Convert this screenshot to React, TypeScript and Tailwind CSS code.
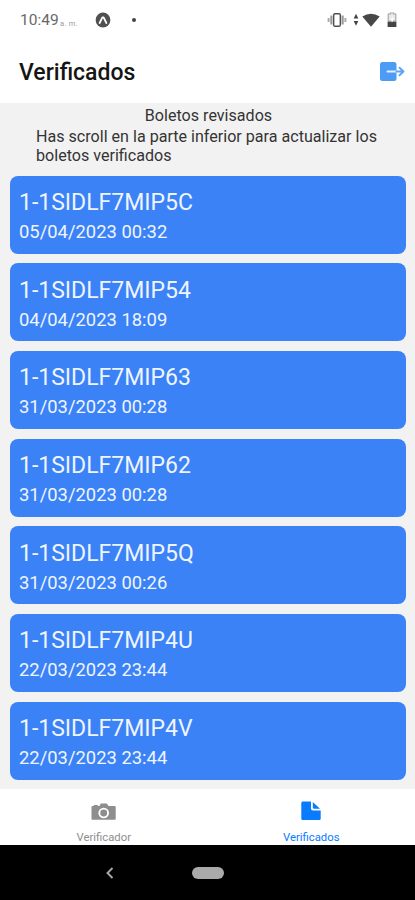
import React from 'react';

type Ticket = {
    code: string;
    date: string;
};

const StatusBar = () => {
    return (
        <div className="h-10 shrink-0 flex items-center justify-between pl-5 pr-[17px] text-[#686868]">
            <div className="flex items-center">
                <span className="w-10 text-[15.5px] leading-5 whitespace-nowrap">10:49</span>
                <span className="w-[19px] pt-2 text-[7.5px] leading-3 tracking-[0.3px] text-[#9a9a9a] whitespace-nowrap">a. m.</span>
                <svg viewBox="0 0 16 16" className="ml-4 h-4 w-4">
                    <circle cx="8" cy="8" r="7.4" fill="#505050" />
                    <path d="M4.6 11 7.4 5.4h1.2l2.8 5.6" fill="none" stroke="#fff" strokeWidth="1.8" strokeLinecap="round" strokeLinejoin="round" />
                </svg>
                <span className="ml-[21px] h-1 w-1 rounded-full bg-[#444]" />
            </div>
            <div className="flex items-center">
                <svg viewBox="0 0 20 16" className="h-4 w-5">
                    <path d="M4.4 3.5v9M15.6 3.5v9" stroke="#999" strokeWidth="2.2" />
                    <path d="M1.6 6v4M18.4 6v4" stroke="#aaa" strokeWidth="2" />
                    <rect x="6.7" y="1.8" width="6.6" height="12.4" rx="1.2" fill="#fff" stroke="#505050" strokeWidth="1.4" />
                </svg>
                <svg viewBox="0 0 6 14" className="ml-1.5 h-3.5 w-1.5">
                    <path d="M3 .8 5.3 5.500H.7ZM3 12.800.7 8h4.600Z" fill="#444" />
                </svg>
                <svg viewBox="0 0 18 14" className="ml-[3px] h-3.5 w-[18px]">
                    <path d="M.3 3.400Q9-1.800 17.700 3.400L9 13.800Z" fill="#484848" />
                </svg>
                <svg viewBox="0 0 12 16" className="ml-1.5 h-4 w-3">
                    <path d="M4.300 2V1h3.400v1h2.100v7H2.200V2Z" fill="#e8e8e8" stroke="#aaa" strokeWidth="1.200" />
                    <path d="M1.600 9.600h8.800V15H1.600Z" fill="#444" />
                    <path d="M6.600 4 4.300 8.400h1.500v2.400l2.400-4.200H6.600Z" fill="#fff" />
                </svg>
            </div>
        </div>
    );
};

const ExitIcon = () => (
    <svg viewBox="0 0 26 20" className="h-5 w-[26px]">
        <rect x="1" y="0" width="16.5" height="19" rx="2.5" fill="#4c9bf5" />
        <path d="M8.500 9.500h9" stroke="#e3f0ff" strokeWidth="2" strokeLinecap="round" />
        <path d="M17.500 9.500h6M20.500 5.700l4 3.800-4 3.800" fill="none" stroke="#5ba4f7" strokeWidth="1.900" strokeLinecap="round" strokeLinejoin="round" />
    </svg>
);

const TicketCard = ({ code, date }: Ticket) => {
    return (
        <div className="h-[78.2px] shrink-0 rounded-lg bg-[#3b82f6] pl-[9px] pt-[12.4px] text-[#eef5ff]">
            <p className="text-[23px] leading-[30px]">{code}</p>
            <p className="text-[18.4px] leading-[28.4px]">{date}</p>
        </div>
    );
};

const TabBar = () => {
    return (
        <nav className="h-14 shrink-0 flex bg-white text-[11.3px] leading-3">
            <div className="flex-1 flex flex-col items-center pt-3.5 text-[#8e8e8f]">
                <svg viewBox="0 0 25 18" className="h-[18px] w-[25px]">
                    <path d="M1.800 3h1V2h4v1h1.700L9.800.4h6L17.500 3h5.900c.8 0 1.300.5 1.300 1.300v11.200c0 .8-.5 1.300-1.300 1.300H1.800c-.8 0-1.300-.5-1.300-1.300V4.300C.5 3.500 1 3 1.800 3Z" fill="currentColor" />
                    <circle cx="12.700" cy="10" r="4.400" fill="none" stroke="#fff" strokeWidth="1.900" />
                </svg>
                <span className="mt-[11px]">Verificador</span>
            </div>
            <div className="flex-1 flex flex-col items-center pt-3 text-[#087bff]">
                <svg viewBox="0 0 20 20" className="h-5 w-5">
                    <path d="M2 .4h8v7.200c0 1.300.8 2 2 2h7.700v7.800c0 1-.6 1.600-1.600 1.600H2C1 19 .3 18.400.3 17.400V2C.3 1 1 .4 2 .4Z" fill="currentColor" />
                    <path d="M11.800 1v5.600c0 .8.400 1.200 1.200 1.200h6Z" fill="currentColor" />
                </svg>
                <span className="mt-[11px]">Verificados</span>
            </div>
        </nav>
    );
};

export default function App() {
    return (
        <div className="h-[900px] w-[415px] flex flex-col overflow-hidden bg-white font-['Roboto',sans-serif]">
            <StatusBar />
            <header className="h-[63px] shrink-0 flex items-center justify-between pl-[19px] pr-[10px]">
                <h1 className="pt-[3px] text-[23px] font-medium leading-7 text-[#151515]">Verificados</h1>
                <ExitIcon />
            </header>
            <main className="h-[686px] shrink-0 flex flex-col overflow-hidden bg-[#f2f2f2] text-[#343434]">
                <div className="h-[72.5px] shrink-0 pt-[3px] text-[16.1px]">
                    <p className="pl-0.5 text-center leading-[19px]">Boletos revisados</p>
                    <p className="mt-[2px] pl-9 pr-6 leading-[19px]">
                        Has scroll en la parte inferior para actualizar los
                        <br />
                        boletos verificados
                    </p>
                </div>
                <div className="flex flex-col gap-[9.5px] pl-2.5 pr-[9px]">
                    {TICKETS.map((ticket) => (
                        <TicketCard key={ticket.code} {...ticket} />
                    ))}
                </div>
            </main>
            <TabBar />
            <div className="flex-1 flex bg-black">
                <div className="w-[192px] flex justify-center pl-7">
                    <svg viewBox="0 0 8 12" className="mt-[22px] h-3 w-2">
                        <path d="M6.500 1 1.500 6l5 5" fill="none" stroke="#aaa" strokeWidth="1.900" />
                    </svg>
                </div>
                <div className="mt-[22px] h-3 w-8 rounded-full bg-[#aaa]" />
            </div>
        </div>
    );
}

const TICKETS: Ticket[] = [
    { code: '1-1SIDLF7MIP5C', date: '05/04/2023 00:32' },
    { code: '1-1SIDLF7MIP54', date: '04/04/2023 18:09' },
    { code: '1-1SIDLF7MIP63', date: '31/03/2023 00:28' },
    { code: '1-1SIDLF7MIP62', date: '31/03/2023 00:28' },
    { code: '1-1SIDLF7MIP5Q', date: '31/03/2023 00:26' },
    { code: '1-1SIDLF7MIP4U', date: '22/03/2023 23:44' },
    { code: '1-1SIDLF7MIP4V', date: '22/03/2023 23:44' },
];
